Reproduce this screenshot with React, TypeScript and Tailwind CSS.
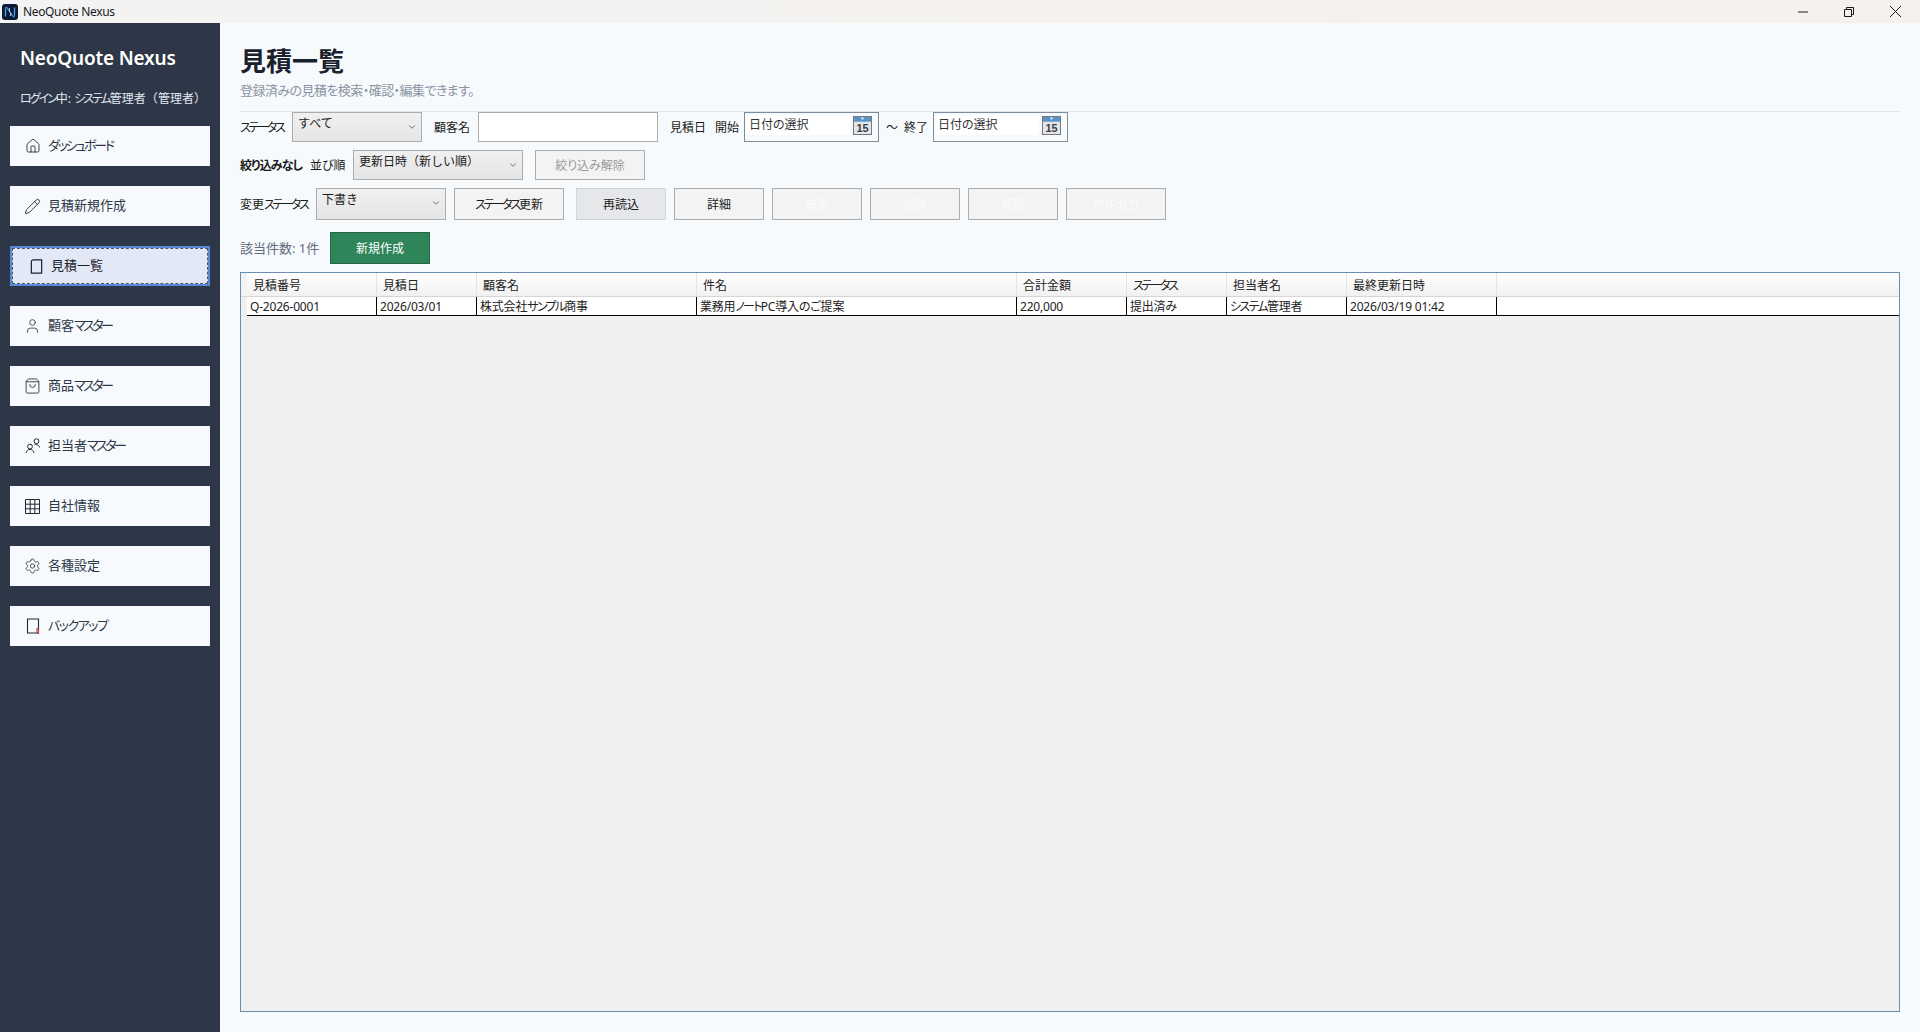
import React from "react";
import { Home, Pencil, User, ShoppingBag, Settings, ChevronDown } from "lucide-react";

const FONT = "font-['Noto_Sans','Noto_Sans_CJK_JP',sans-serif] [font-feature-settings:'palt']";

/* The reference's UI font sets katakana narrow and brackets full width. */
function K({ s, kana = "tracking-[-2.2px]" }: { s: string; kana?: string }) {
  const parts = s.split(/([ァ-ヶー]+|[（）]+)/).filter(Boolean);
  return (
    <>
      {parts.map((p, i) =>
        /[（）]/.test(p) ? (
          <span key={i} className="[font-feature-settings:normal]">{p}</span>
        ) : /[ァ-ヶー]/.test(p) ? (
          <span key={i} className={kana}>{p}</span>
        ) : (
          <span key={i}>{p}</span>
        )
      )}
    </>
  );
}

function BookIcon({ className = "" }: { className?: string }) {
  return (
    <svg viewBox="0 0 16 16" className={className} fill="none" stroke="currentColor" strokeWidth="1.3">
      <path d="M4.5 1h9v14H2.5V2.8C2.5 1.7 3.4 1 4.5 1z" />
    </svg>
  );
}

function NoteIcon({ className = "" }: { className?: string }) {
  return (
    <svg viewBox="0 0 16 16" className={className} fill="none" stroke="currentColor" strokeWidth="1.1">
      <path d="M2.5 1h11v14h-11z" />
      <path d="M12 10.5V15h1.5v-4.5z" stroke="#b0413e" />
    </svg>
  );
}

function PeopleIcon({ className = "" }: { className?: string }) {
  return (
    <svg viewBox="0 0 16 16" className={className} fill="none" stroke="currentColor" strokeWidth="1">
      <circle cx="11.5" cy="3.2" r="2.4" />
      <circle cx="5" cy="8.6" r="2.4" />
      <path d="M1 15c.3-2.2 2-3.6 4-3.6s3.6 1.4 4 3.6" />
      <path d="M9.5 6.3c.5 0 1.2.4 2 .4 1.4 0 2.6.9 3 2.8" />
    </svg>
  );
}

function GridIcon({ className = "" }: { className?: string }) {
  return (
    <svg viewBox="0 0 15 15" className={className} fill="none" stroke="currentColor" strokeWidth="1">
      <path d="M.5.5h14v14H.5zM.5 5.2h14M.5 9.8h14M5.2.5v14M9.8.5v14" />
    </svg>
  );
}

const navItems = [
  { label: "ダッシュボード", kana: "tracking-[-2.3px]", icon: <Home className="w-[16px] h-[16px]" strokeWidth={1.3} /> },
  { label: "見積新規作成", kana: "", icon: <Pencil className="w-[17px] h-[17px]" strokeWidth={1.3} /> },
  { label: "見積一覧", kana: "", icon: <BookIcon className="w-[15px] h-[17px]" />, active: true },
  { label: "顧客マスター", kana: "tracking-[-2.5px]", icon: <User className="w-[20px] h-[20px]" strokeWidth={1.1} /> },
  { label: "商品マスター", kana: "tracking-[-2.5px]", icon: <ShoppingBag className="w-[18px] h-[18px]" strokeWidth={1.2} /> },
  { label: "担当者マスター", kana: "tracking-[-2.5px]", icon: <PeopleIcon className="w-[16px] h-[16px]" /> },
  { label: "自社情報", kana: "", icon: <GridIcon className="w-[15px] h-[15px]" /> },
  { label: "各種設定", kana: "", icon: <Settings className="w-[18px] h-[18px]" strokeWidth={1.1} /> },
  { label: "バックアップ", kana: "tracking-[-1.5px]", icon: <NoteIcon className="w-[16px] h-[16px]" /> },
];

function NavButton({ label, icon, active, kana }: { label: string; icon: React.ReactNode; active?: boolean; kana: string }) {
  if (active) {
    return (
      <div className="h-[40px] border-2 border-[#5a8ad6] bg-[#e2e8f5]">
        <div className="h-full border border-dashed border-[#4a5568] flex items-center pl-[15px] gap-[7px] text-[13px] text-[#1a202c]">
          <span className="w-[16px] flex justify-center">{icon}</span>
          <span><K s={label} kana={kana} /></span>
        </div>
      </div>
    );
  }
  return (
    <div className="h-[40px] bg-[#f7fafc] flex items-center pl-[14px] gap-[7px] text-[13px] text-[#2d3748]">
      <span className="w-[17px] flex justify-center text-[#1f2937]">{icon}</span>
      <span><K s={label} kana={kana} /></span>
    </div>
  );
}

function Combo({ value, widthClass, heightClass = "h-[30px]" }: { value: string; widthClass: string; heightClass?: string }) {
  return (
    <div className={`${widthClass} ${heightClass} border border-[#acacac] bg-gradient-to-b from-[#f0f0f0] to-[#e5e5e5] flex items-start justify-between pl-[5px] pr-[4px] pt-[2px] text-[12px] leading-[18px] text-[#1a1a1a] [font-feature-settings:normal]`}>
      <span>{value}</span>
      <ChevronDown className="w-[10px] h-[10px] mt-[7px] text-[#555]" strokeWidth={2} />
    </div>
  );
}

function CalendarIcon() {
  return (
    <svg viewBox="0 0 20 20" className="w-[19px] h-[19px]">
      <rect x="0.5" y="0.5" width="19" height="19" fill="#e4e6e8" stroke="#6d7278" />
      <rect x="1" y="1" width="18" height="5" fill="#5a93c8" />
      <rect x="9" y="1.5" width="2" height="2" fill="#fff" />
      <text x="10" y="17" textAnchor="middle" fontSize="11.5" fontWeight="700" fill="#3a3f45" fontFamily="Liberation Sans, sans-serif">15</text>
    </svg>
  );
}

function DatePicker() {
  return (
    <div className="w-[135px] h-[30px] border border-[#7f8c9a] bg-[#f7fafc] pl-[2px] pr-[6px] pt-[2px]">
      <div className="h-[20px] flex items-center justify-between">
        <span className="flex-1 h-[20px] bg-white text-[12px] leading-[20px] pl-[2px] text-[#333]">日付の選択</span>
        <span className="ml-[3px] mt-[1px]"><CalendarIcon /></span>
      </div>
    </div>
  );
}

function Btn({ children, widthClass, variant = "normal" }: { children?: React.ReactNode; widthClass: string; variant?: "normal" | "hot" | "off" | "offFaint" }) {
  const cls = {
    normal: "border-[#acacac] bg-[#f3f3f3] text-[#1a1a1a]",
    hot: "border-[#ccd5e0] bg-[#e5e7eb] text-[#1a1a1a]",
    off: "border-[#acacac] bg-[#f3f3f3] text-[#9a9a9a]",
    offFaint: "border-[#acacac] bg-[#f3f3f3] text-[#fbfbfb]",
  }[variant];
  return <div className={`${widthClass} h-full border ${cls} flex items-center justify-center text-[12px] pt-[1px]`}>{children}</div>;
}

const COLS = "grid-cols-[130px_100px_220px_320px_110px_100px_120px_150px]";
const headers = ["見積番号", "見積日", "顧客名", "件名", "合計金額", "ステータス", "担当者名", "最終更新日時"];
const row = ["Q-2026-0001", "2026/03/01", "株式会社サンプル商事", "業務用ノートPC導入のご提案", "220,000", "提出済み", "システム管理者", "2026/03/19 01:42"];

export default function App() {
  return (
    <div className={`${FONT} w-full h-screen flex flex-col overflow-hidden bg-[#f7fafd]`}>
      <header className="h-[23px] shrink-0 flex items-center bg-gradient-to-r from-[#f3f3f3] to-[#f6f1ec]">
        <svg viewBox="0 0 16 16" className="w-[16px] h-[16px] ml-[2px]">
          <rect width="16" height="16" rx="3" fill="#0c1a36" />
          <path d="M3.5 4.5c0-1 .6-1.5 1.4-1.2M12.5 11.5c0 1-.6 1.5-1.4 1.2" stroke="#3f8fe0" strokeWidth="1.2" fill="none" />
          <path d="M3.5 4.5v8M12.5 3.5v8M5 3.5l6 9" stroke="#4fa3e8" strokeWidth="1.3" fill="none" />
          <path d="M7.5 4v4M8.5 8v4" stroke="#8fc6f2" strokeWidth="1" fill="none" />
        </svg>
        <span className="ml-[5px] text-[12px] text-[#1a1a1a] tracking-[-0.35px]">NeoQuote Nexus</span>
        <div className="ml-auto flex items-center h-full text-[#1a1a1a] pr-[2px]">
          <div className="w-[46px] flex justify-center">
            <svg viewBox="0 0 10 10" className="w-[10px] h-[10px]"><path d="M0 5h10" stroke="currentColor" strokeWidth="1" /></svg>
          </div>
          <div className="w-[46px] flex justify-center">
            <svg viewBox="0 0 10 10" className="w-[10px] h-[10px]" fill="none" stroke="currentColor"><path d="M.5 2.5h7v7h-7zM2.5 2.5V.5h7v7h-2" /></svg>
          </div>
          <div className="w-[46px] flex justify-center">
            <svg viewBox="0 0 10 10" className="w-[11px] h-[11px]" fill="none" stroke="currentColor" strokeWidth="0.9"><path d="M0 0l10 10M10 0L0 10" /></svg>
          </div>
        </div>
      </header>

      <div className="flex-1 flex min-h-0">
        <aside className="w-[220px] shrink-0 bg-[#2d3748] px-[10px]">
          <div className="h-[51px] flex items-end pl-[10px] text-[19px] font-semibold text-white leading-[32px] whitespace-nowrap tracking-[-0.2px]">NeoQuote Nexus</div>
          <div className="h-[35px] flex items-end pl-[10px] text-[12px] text-[#e2e8f0] leading-[20px] whitespace-nowrap"><span><K s="ログイン中: システム管理者（管理者）" kana="tracking-[-2px]" /></span></div>
          <nav className="mt-[17px] flex flex-col gap-[20px]">
            {navItems.map((n) => (
              <NavButton key={n.label} {...n} />
            ))}
          </nav>
        </aside>

        <main className="flex-1 min-w-0 pl-[20px] pr-[20px] flex flex-col">
          <div className="h-[89px] shrink-0 border-b border-[#e2e8f0]">
            <h1 className="pt-[20px] text-[26px] font-bold leading-[36px] text-[#1a202c]">見積一覧</h1>
            <p className="mt-[2px] text-[13px] leading-[18px] text-[#8a94a3] tracking-[-0.55px]">登録済みの見積を検索・確認・編集できます。</p>
          </div>

          <div className="h-[30px] flex items-center text-[12px] text-[#1a1a1a] whitespace-nowrap">
            <span className="w-[52px] pt-[1px]"><K s="ステータス" /></span>
            <Combo value="すべて" widthClass="w-[130px]" />
            <span className="w-[44px] ml-[12px] pt-[1px]">顧客名</span>
            <div className="w-[180px] h-[30px] border border-[#acacac] bg-white" />
            <span className="w-[45px] ml-[12px] pt-[1px]">見積日</span>
            <span className="w-[29px] pt-[1px]">開始</span>
            <DatePicker />
            <span className="w-[18px] ml-[7px] pt-[1px]">〜</span>
            <span className="w-[29px] pt-[1px]">終了</span>
            <DatePicker />
          </div>

          <div className="h-[30px] mt-[8px] flex items-center text-[12px] text-[#1a1a1a] whitespace-nowrap">
            <span className="w-[70px] font-bold pt-[1px] tracking-[-0.9px]">絞り込みなし</span>
            <span className="w-[43px] pt-[1px]">並び順</span>
            <Combo value="更新日時（新しい順）" widthClass="w-[170px]" />
            <div className="ml-[12px] h-full flex">
              <Btn widthClass="w-[110px]" variant="off">絞り込み解除</Btn>
            </div>
          </div>

          <div className="h-[32px] mt-[8px] flex items-center text-[12px] text-[#1a1a1a] whitespace-nowrap">
            <span className="w-[76px] pt-[1px]"><K s="変更ステータス" /></span>
            <Combo value="下書き" widthClass="w-[130px]" heightClass="h-[32px]" />
            <div className="h-full flex gap-[8px] ml-[8px]">
              <Btn widthClass="w-[110px] mr-[4px]"><span><K s="ステータス更新" /></span></Btn>
              <Btn widthClass="w-[90px]" variant="hot">再読込</Btn>
              <Btn widthClass="w-[90px]">詳細</Btn>
              <Btn widthClass="w-[90px]" variant="offFaint">編集</Btn>
              <Btn widthClass="w-[90px]" variant="offFaint">削除</Btn>
              <Btn widthClass="w-[90px]" variant="offFaint">複製</Btn>
              <Btn widthClass="w-[100px]" variant="offFaint">PDF出力</Btn>
            </div>
          </div>

          <div className="h-[32px] mt-[12px] flex items-center text-[12px] text-[#5f6b7a]">
            <span className="w-[90px] text-[13px] pt-[1px] whitespace-nowrap">該当件数: 1件</span>
            <div className="w-[100px] h-full bg-[#2f855a] border border-[#276749] text-white flex items-center justify-center pt-[1px]">新規作成</div>
          </div>

          <div className="mt-[8px] mb-[20px] flex-1 min-h-0 border border-[#6b8cb3] bg-[#efefef] flex flex-col text-[12px]">
            <div className="h-[24px] shrink-0 flex bg-gradient-to-b from-white to-[#f1f1f1] border-b border-[#d6d6d6]">
              <div className="w-[6px] shrink-0 bg-[#f3f3f3]" />
              <div className={`grid ${COLS} text-[#222]`}>
                {headers.map((h) => (
                  <div key={h} className="pl-[6px] pt-[3px] border-r border-[#e4e4e4] flex items-center"><span><K s={h} /></span></div>
                ))}
              </div>
            </div>
            <div className="h-[19px] shrink-0 flex">
              <div className="w-[6px] shrink-0" />
              <div className={`grid ${COLS} bg-white border-b-[1.5px] border-black text-[#222] tracking-[-0.2px]`}>
                {row.map((c, i) => (
                  <div key={i} className="pl-[3px] pt-[1px] border-r border-black flex items-center whitespace-nowrap overflow-hidden"><span><K s={c} kana="tracking-[-1.7px]" /></span></div>
                ))}
              </div>
              <div className="flex-1 bg-white border-b-[1.5px] border-black" />
            </div>
          </div>
        </main>
      </div>
    </div>
  );
}
